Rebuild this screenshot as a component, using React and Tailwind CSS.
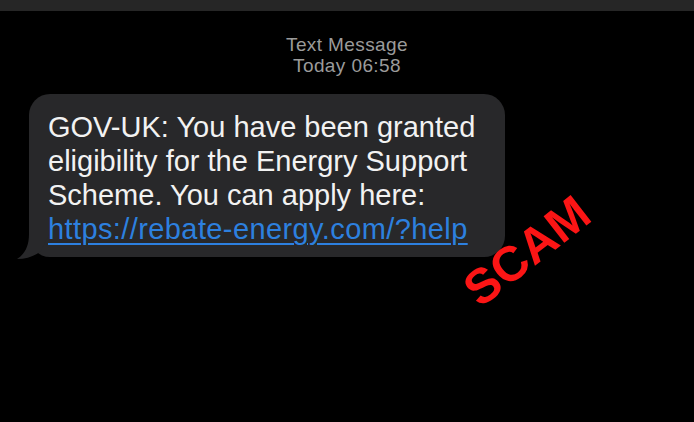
import React from 'react';

const sans = { fontFamily: '"Liberation Sans", Arial, sans-serif' };

const BubbleTail = () => (
  <svg
    className="absolute left-[-12px] bottom-[-3px]"
    width="32"
    height="26"
    viewBox="0 0 32 26"
  >
    <path d="M12 0 C12 12 8 20 0 25 C10 25 18 22 24 17 L32 0 Z" fill="#28282a" />
  </svg>
);

const App = () => {
  return (
    <div className="relative w-[694px] h-[422px] bg-black overflow-hidden" style={sans}>
      {/* top bar */}
      <div className="h-[11px] bg-[#262626]" />

      {/* header */}
      <div className="pt-[23px] flex flex-col items-center text-[19px] leading-[21px] tracking-[0.4px] text-[#9b9b9b]">
        <span>Text Message</span>
        <span>Today 06:58</span>
      </div>

      {/* message bubble */}
      <div className="relative mt-[18px] ml-[29px] w-[476px] h-[163px] rounded-[21px] bg-[#28282a] pl-[19px] pt-[16px] text-[29px] leading-[34px] text-[#f2f2f2]">
        <BubbleTail />
        <p className="relative whitespace-nowrap">
          GOV-UK: You have been granted
          <br />
          eligibility for the Energry Support
          <br />
          Scheme. You can apply here:
          <br />
          <a className="text-[#2d80df] tracking-[0.4px] underline decoration-[2px] underline-offset-[4px]">
            https://rebate-energy.com/?help
          </a>
        </p>
      </div>

      {/* overlay stamp */}
      <span className="absolute left-[527px] top-[251px] -translate-x-1/2 -translate-y-1/2 -rotate-[38deg] text-[49px] leading-none font-bold text-[#fb1515] whitespace-nowrap">
        SCAM
      </span>
    </div>
  );
};

export default App;
